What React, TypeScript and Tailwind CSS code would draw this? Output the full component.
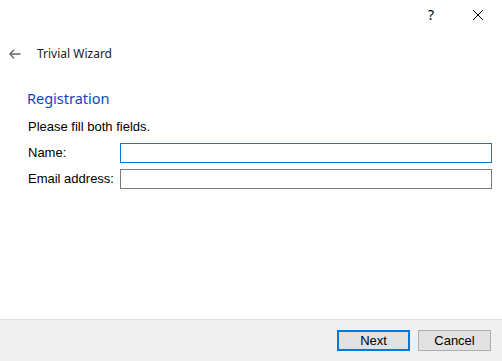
import React from "react";

export default function App() {
  return (
    <div className="w-[502px] h-[361px] bg-white flex flex-col overflow-hidden" style={{ fontFamily: '"Liberation Sans", Arial, sans-serif' }}>
      {/* title bar */}
      <div className="h-[30px] flex items-center justify-end pr-[18px] gap-[38px]">
        <span className="text-[14px] text-[#000] font-['Noto_Sans',sans-serif] leading-none">?</span>
        <svg width="12" height="12" viewBox="0 0 12 12">
          <path d="M1 1L11 11M11 1L1 11" stroke="#000" strokeWidth="1" />
        </svg>
      </div>
      {/* header */}
      <div className="h-[48px] flex items-center pl-[9px]">
        <svg width="12" height="10" viewBox="0 0 12 10">
          <path d="M0.5 5H11.5M5 0.8L0.8 5L5 9.2" stroke="#666" strokeWidth="1.3" fill="none" />
        </svg>
        <span className="ml-[16px] text-[12px] text-[#1a1a1a] font-['Noto_Sans',sans-serif]">Trivial Wizard</span>
      </div>
      {/* content */}
      <div className="flex-1 flex flex-col pl-[27px] pr-[10px]">
        <div className="mt-[10px] text-[14.5px] text-[#0a48c2] font-['Noto_Sans',sans-serif] leading-[20px]">Registration</div>
        <div className="mt-[11px] text-[13px] text-black leading-[16px] pl-[1px]">Please fill both fields.</div>
        <div className="mt-[8px] flex items-center h-[20px] pl-[1px]">
          <span className="w-[92px] text-[13px] text-black">Name:</span>
          <div className="flex-1 h-[20px] border border-[#0078d7] bg-white" />
        </div>
        <div className="mt-[6px] flex items-center h-[20px] pl-[1px]">
          <span className="w-[92px] text-[13px] text-black">Email address:</span>
          <div className="flex-1 h-[20px] border border-[#7a7a7a] bg-white" />
        </div>
      </div>
      {/* footer */}
      <div className="h-[42px] bg-[#f0f0f0] border-t border-[#dfdfdf] flex items-center justify-end gap-[8px] pr-[11px]">
        <div className="w-[73px] h-[21px] bg-[#e1e1e1] border-2 border-[#0078d7] flex items-center justify-center text-[13px] text-black">Next</div>
        <div className="w-[73px] h-[21px] bg-[#e1e1e1] border border-[#adadad] flex items-center justify-center text-[13px] text-black">Cancel</div>
      </div>
    </div>
  );
}
